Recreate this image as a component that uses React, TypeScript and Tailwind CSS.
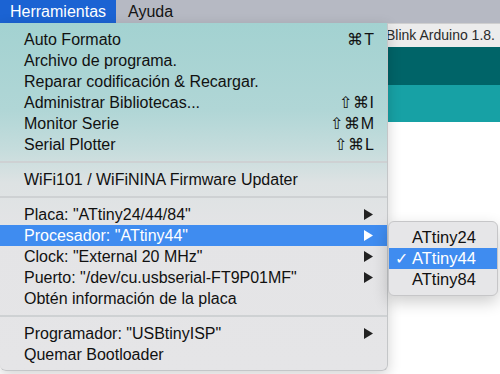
const font = { fontFamily: '"Liberation Sans", Arial, sans-serif' };

type Item = {
  label: string;
  shortcut?: string;
  arrow?: boolean;
  active?: boolean;
};

const groups: Item[][] = [
  [
    { label: "Auto Formato", shortcut: "⌘T" },
    { label: "Archivo de programa." },
    { label: "Reparar codificación & Recargar." },
    { label: "Administrar Bibliotecas...", shortcut: "⇧⌘I" },
    { label: "Monitor Serie", shortcut: "⇧⌘M" },
    { label: "Serial Plotter", shortcut: "⇧⌘L" },
  ],
  [{ label: "WiFi101 / WiFiNINA Firmware Updater" }],
  [
    { label: 'Placa: "ATtiny24/44/84"', arrow: true },
    { label: 'Procesador: "ATtiny44"', arrow: true, active: true },
    { label: 'Clock: "External 20 MHz"', arrow: true },
    { label: 'Puerto: "/dev/cu.usbserial-FT9P01MF"', arrow: true },
    { label: "Obtén información de la placa" },
  ],
  [
    { label: 'Programador: "USBtinyISP"', arrow: true },
    { label: "Quemar Bootloader" },
  ],
];

const MenuRow = ({ item }: { item: Item }) => (
  <div
    className={`flex h-[21px] items-center pl-6 pr-[12px] text-[16px] ${
      item.active ? "bg-[#3f8cf0] text-white" : "text-[#111]"
    }`}
  >
    <span className="flex-1 whitespace-nowrap">{item.label}</span>
    {item.shortcut && <span className="tracking-[1px]">{item.shortcut}</span>}
    {item.arrow && (
      <svg width="9" height="11" viewBox="0 0 9 11" className="mr-[2px]">
        <path d="M0 0 L9 5.5 L0 11 Z" fill={item.active ? "#fff" : "#222"} />
      </svg>
    )}
  </div>
);

export default function App() {
  return (
    <div className="relative h-[374px] w-[500px] overflow-hidden bg-white" style={font}>
      <div className="flex h-[23px] items-center bg-[#b6b9c3] text-[16px] text-[#141414]">
        <div className="flex h-full items-center bg-[#1b63d3] pl-[10px] pr-[10px] text-white">Herramientas</div>
        <div className="px-[12px]">Ayuda</div>
      </div>

      <div className="flex flex-col">
        <div className="flex h-[24px] items-center border-t border-[#cfcfcf] bg-[#ececec] pl-[387px] text-[14px] text-[#2a2a2a]">
          <span className="-ml-[1px] whitespace-nowrap">Blink Arduino 1.8.</span>
        </div>
        <div className="h-[38px] bg-[#006468]" />
        <div className="h-[37px] bg-[#17a1a5]" />
        <div className="flex-1 bg-white" />
      </div>

      <div className="absolute left-0 top-[23px] w-[388px] overflow-hidden rounded-b-[6px] border-r border-b border-[#c4c6c8] bg-[linear-gradient(to_bottom,#a3d2d1_0%,#b0d6d6_25%,#c4dcdc_36%,#dde2e3_46%,#e4e4e6_60%,#e5e5e7_100%)] pt-[6px] pb-[5px] shadow-[0_4px_14px_rgba(0,0,0,0.18)]">
        {groups.map((g, gi) => (
          <div key={gi}>
            {gi > 0 && <div className="my-[6px] h-[2px] bg-[#ced1d3]" />}
            {g.map((item) => (
              <MenuRow key={item.label} item={item} />
            ))}
          </div>
        ))}
      </div>

      <div className="absolute left-[388px] top-[221px] w-[110px] rounded-[6px] border border-[#c6c6c8] bg-[#e6e6e8] py-[5px] shadow-[0_6px_16px_rgba(0,0,0,0.2)]">
        {["ATtiny24", "ATtiny44", "ATtiny84"].map((t) => {
          const on = t === "ATtiny44";
          return (
            <div
              key={t}
              className={`flex h-[21px] items-center text-[16.5px] ${
                on ? "bg-[#3f8cf0] text-white" : "text-[#111]"
              }`}
            >
              <span className="w-[23px] pl-[6px] text-[16px]">{on ? "✓" : ""}</span>
              <span>{t}</span>
            </div>
          );
        })}
      </div>
    </div>
  );
}
